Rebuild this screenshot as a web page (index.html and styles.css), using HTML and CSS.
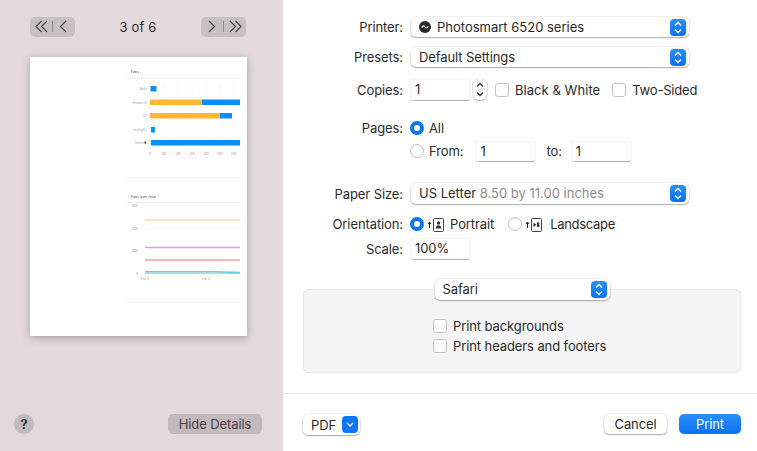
FILE: index.html
```html
<!DOCTYPE html>
<html lang="en">
<head>
<meta charset="utf-8">
<title>Print</title>
<link rel="stylesheet" href="styles.css">
</head>
<body>
<div class="app">
  <aside class="side">
    <div class="pager">
      <div class="pgroup">
        <svg class="pico" viewBox="0 0 45 20"><path d="M11.500 4 6 9.500l5.500 5.500M17 4l-5.500 5.500L17 15M36 4l-5.500 5.500L36 15"/><path class="sep" d="M22.500 4v11"/></svg>
      </div>
      <span class="pcount">3 of 6</span>
      <div class="pgroup">
        <svg class="pico" viewBox="0 0 45 20"><path d="m8 4 5.500 5.500L8 15M29 4l5.500 5.500L29 15M34.500 4 40 9.500 34.500 15"/><path class="sep" d="M22.500 4v11"/></svg>
      </div>
    </div>
    <div class="sheet">
      <svg class="sheet-art" viewBox="30 57 217 279">
        <g class="rules">
          <path d="M127 78.500h113M127 177.500h113M127 202.500h113M127 302.500h113"/>
          <path class="grid" d="M150 82v67M164 82v67M178 82v67M192 82v67M206 82v67M220 82v67M234 82v67M145 206.500h95M145 228.500h95"/>
        </g>
        <text class="t-title" x="131" y="73">Fans</text>
        <g class="t-axis" text-anchor="end">
          <text x="147" y="90">Alpha</text>
          <text x="147" y="103.500">Amazon IG</text>
          <text x="147" y="117">Q4</text>
          <text x="147" y="130.500">testing123</text>
          <text x="144" y="144">Tommy</text>
        </g>
        <rect class="blue" x="150.500" y="86" width="6" height="5.500"/>
        <rect class="gold" x="150" y="99.500" width="52" height="5.500"/>
        <rect class="blue" x="202" y="99.500" width="38" height="5.500"/>
        <rect class="gold" x="150" y="113" width="70" height="5.500"/>
        <rect class="blue" x="220" y="113" width="12" height="5.500"/>
        <rect class="blue" x="151" y="127" width="4" height="5.500"/>
        <rect class="blue" x="151" y="140" width="89" height="5.500"/>
        <rect class="dark" x="144.500" y="141.500" width="1.500" height="2"/>
        <g class="t-axis" text-anchor="middle">
          <text x="150" y="155">0</text><text x="164" y="155">100</text><text x="178" y="155">200</text><text x="192" y="155">300</text><text x="206" y="155">400</text><text x="220" y="155">500</text><text x="234" y="155">600</text>
        </g>
        <text class="t-title" x="131" y="197.500">Fans over time</text>
        <g class="t-axis" text-anchor="end">
          <text x="138" y="207">3000</text><text x="138" y="229.500">2000</text><text x="138" y="252">1000</text><text x="138" y="275">0</text>
        </g>
        <path class="l-yellow" d="M145 220h95"/>
        <path class="l-purple" d="M145 247.500h95"/>
        <path class="l-red" d="M145 260h95"/>
        <path class="l-green" d="M145 273.300h95"/>
        <path class="l-teal" d="M145 271.800h70l25 .8"/>
        <g class="t-axis" text-anchor="middle">
          <text x="145" y="279.500">Sep 12</text><text x="206" y="279.500">Sep 13</text>
        </g>
      </svg>
    </div>
    <div class="side-foot">
      <button class="help">?</button>
      <button class="hide">Hide Details</button>
    </div>
  </aside>
  <main class="main">
    <div class="form">
      <div class="row r-printer">
        <span class="lbl">Printer:</span>
        <div class="sel sel-wide">
          <svg class="printer-ico" viewBox="0 0 12 12"><circle cx="6" cy="6" r="6"/><path d="M2.800 6.800C4 4.200 5 4.600 6 6s2 1.600 3.200-.8"/></svg>
          <span class="sel-text sel-loose">Photosmart 6520 series</span>
          <span class="stepper"><svg viewBox="0 0 16 17"><path d="m5 6.500 3-3 3 3M5 10.500l3 3 3-3"/></svg></span>
        </div>
      </div>
      <div class="row r-presets">
        <span class="lbl">Presets:</span>
        <div class="sel sel-wide">
          <span class="sel-text">Default Settings</span>
          <span class="stepper"><svg viewBox="0 0 16 17"><path d="m5 6.500 3-3 3 3M5 10.500l3 3 3-3"/></svg></span>
        </div>
      </div>
      <div class="row r-copies">
        <span class="lbl">Copies:</span>
        <div class="field">1</div>
        <div class="spin"><svg viewBox="0 0 14 21"><path d="m4 7.500 3-3 3 3M4 13.500l3 3 3-3"/><path class="spin-line" d="M1 10.500h12"/></svg></div>
        <label class="chk c-bw"><span class="box"></span>Black &amp; White</label>
        <label class="chk c-two"><span class="box"></span>Two-Sided</label>
      </div>
      <div class="row r-pages">
        <span class="lbl">Pages:</span>
        <span class="radio on"></span><span class="rtext">All</span>
      </div>
      <div class="row r-from">
        <span class="lbl"></span>
        <span class="radio"></span><span class="rtext">From:</span>
        <div class="field f-from">1</div>
        <span class="rtext t-to">to:</span>
        <div class="field f-to">1</div>
      </div>
      <div class="row r-paper">
        <span class="lbl">Paper Size:</span>
        <div class="sel sel-wide sel-tall">
          <span class="sel-text sel-loose">US Letter <span class="dim">8.50 by 11.00 inches</span></span>
          <span class="stepper"><svg viewBox="0 0 16 17"><path d="m5 6.500 3-3 3 3M5 10.500l3 3 3-3"/></svg></span>
        </div>
      </div>
      <div class="row r-orient">
        <span class="lbl">Orientation:</span>
        <span class="radio on"></span>
        <svg class="oico" viewBox="0 0 17 15"><path class="arr" d="M2.500 11V5M1 7l1.500-2L4 7"/><rect x="6.500" y="1.500" width="10" height="13" rx="1"/><circle class="fill" cx="11.500" cy="6" r="1.700"/><path class="fill" d="M8.800 11.500c0-2.400 1.200-3.300 2.700-3.300s2.700.9 2.700 3.300z"/></svg>
        <span class="rtext t-port">Portrait</span>
        <span class="radio r-land"></span>
        <svg class="oico" viewBox="0 0 17 15"><path class="arr" d="M2.500 11V5M1 7l1.500-2L4 7"/><rect x="6.500" y="1.500" width="10" height="13" rx="1"/><path class="fill" d="M8.500 5.500v4.500l2.800-2.200zM12 5.500h2.300v4.500H12z"/></svg>
        <span class="rtext t-land">Landscape</span>
      </div>
      <div class="row r-scale">
        <span class="lbl">Scale:</span>
        <div class="field">100%</div>
      </div>
    </div>
    <section class="panel">
      <div class="sel sel-safari sel-tall">
        <span class="sel-text">Safari</span>
        <span class="stepper"><svg viewBox="0 0 16 17"><path d="m5 6.500 3-3 3 3M5 10.500l3 3 3-3"/></svg></span>
      </div>
      <div class="panel-checks">
        <label class="chk"><span class="box"></span>Print backgrounds</label>
        <label class="chk"><span class="box"></span>Print headers and footers</label>
      </div>
    </section>
    <footer class="foot">
      <div class="pdf">PDF<span class="pdf-arrow"><svg viewBox="0 0 16 17"><path d="m5 7 3 3 3-3"/></svg></span></div>
      <div class="actions">
        <button class="btn">Cancel</button>
        <button class="btn primary">Print</button>
      </div>
    </footer>
  </main>
</div>
</body>
</html>
```
FILE: styles.css
```css
* { box-sizing: border-box; }
html, body { margin: 0; padding: 0; height: 100%; }
body {
  font-family: Inter, "Liberation Sans", sans-serif;
  font-size: 13px;
  letter-spacing: -.1px;
  color: #2b2a2b;
  background: #fff;
  overflow: hidden;
}
button { font: inherit; letter-spacing: inherit; color: inherit; border: 0; padding: 0; }
.app { display: flex; width: 757px; height: 451px; }

/* sidebar */
.side {
  width: 283px;
  flex: none;
  background: #e4dadd;
  display: flex;
  flex-direction: column;
  padding: 17px 21px 17px 30px;
}
.pager { display: flex; align-items: center; justify-content: space-between; height: 20px; margin-right: 16px; }
.pgroup { width: 45px; height: 20px; border-radius: 5px; background: #c9c0c3; }
.pico { display: block; width: 45px; height: 20px; fill: none; stroke: #4a4648; stroke-width: 1.2; }
.pico .sep { stroke: #948c8f; stroke-width: 1; }
.pcount { font-size: 13px; letter-spacing: .2px; }
.sheet {
  width: 217px;
  height: 279px;
  margin-top: 20px;
  background: #fff;
  box-shadow: 0 2px 8px rgba(60, 40, 50, .35);
}
.sheet-art { display: block; width: 217px; height: 279px; filter: blur(.4px); letter-spacing: 0; }
.rules path { stroke: #eeeeee; stroke-width: 1; fill: none; }
.rules .grid { stroke: #f6f6f6; }
.t-title { font-size: 3.600px; fill: #444; }
.t-axis { font-size: 2.800px; fill: #9aa3ad; }
.blue { fill: #0a90f5; }
.gold { fill: #fdb732; }
.dark { fill: #333; }
.l-yellow, .l-purple, .l-red, .l-green, .l-teal { fill: none; stroke-width: 1.500; }
.l-yellow { stroke: #fbe2a0; }
.l-purple { stroke: #c9a8e2; }
.l-red { stroke: #fb9c9a; }
.l-green { stroke: #b9e6b0; }
.l-teal { stroke: #6fcdd6; stroke-width: 1.600; }
.side-foot { margin-top: auto; margin-left: -16px; display: flex; align-items: center; justify-content: space-between; }
.help {
  width: 20px; height: 20px; border-radius: 50%;
  background: #c4babe; color: #1f1d1e;
  font-size: 13px; font-weight: 600; line-height: 20px; text-align: center;
}
.hide {
  width: 94px; height: 20px; border-radius: 5px;
  background: #c4babe; color: #454144;
  font-size: 13px; line-height: 20px; text-align: center;
}

/* main */
.main { flex: 1; display: flex; flex-direction: column; background: #fff; padding-top: 17px; }
.form { padding-left: 20px; padding-right: 16px; }
.row { display: flex; align-items: center; }
.lbl { width: 100px; flex: none; text-align: right; margin-right: 8px; }
.r-printer, .r-presets { height: 20px; }
.r-presets { margin-top: 10px; }
.r-copies { height: 21px; margin-top: 12px; }
.r-pages { height: 20px; margin-top: 18px; }
.r-from { height: 20px; margin-top: 3px; }
.r-paper { height: 21px; margin-top: 22px; }
.r-orient { height: 20px; margin-top: 10px; }
.r-scale { height: 21px; margin-top: 4px; }

.sel {
  display: flex; align-items: center; justify-content: space-between;
  height: 20px; border-radius: 5px; background: #fff;
  padding: 0 3px 0 8px;
  box-shadow: 0 0 0 .5px rgba(0,0,0,.1), 0 1px 1.500px rgba(0,0,0,.3);
}
.sel-wide { width: 278px; }
.sel-tall { height: 21px; }
.sel-tall .sel-text { padding-bottom: 1px; }
.sel-safari { width: 175px; align-self: center; margin-top: -11px; }
.sel-text { flex: 1; white-space: nowrap; }
.sel-loose { letter-spacing: 0; }
.dim { color: #8c8c8c; }
.printer-ico { width: 12px; height: 12px; margin-right: 6px; flex: none; }
.printer-ico circle { fill: #2a2a2a; }
.printer-ico path { fill: none; stroke: #fff; stroke-width: 1.100; }
.stepper { width: 16px; height: 17px; border-radius: 4px; background: linear-gradient(#2b8ffb, #0a72f0); flex: none; }
.stepper svg, .pdf-arrow svg { display: block; width: 100%; height: 100%; fill: none; stroke: #fff; stroke-width: 1.300; }

.field {
  width: 59px; height: 21px; flex: none; background: #fff;
  padding-left: 4px; line-height: 21px;
  box-shadow: inset 0 0 0 .5px rgba(0,0,0,.08), 0 .5px 1px rgba(0,0,0,.3);
}
.r-from .field { height: 20px; line-height: 20px; }
.spin {
  width: 14px; height: 21px; margin-left: 3px; margin-right: 8px; flex: none; border-radius: 6px; background: #fff;
  box-shadow: 0 0 0 .5px rgba(0,0,0,.1), 0 1px 1.500px rgba(0,0,0,.28);
}
.spin svg { display: block; width: 14px; height: 21px; fill: none; stroke: #333; stroke-width: 1.300; }
.spin .spin-line { stroke: #eee; stroke-width: 1; }
.chk { display: flex; align-items: center; white-space: nowrap; }
.box {
  width: 14px; height: 14px; flex: none; margin-right: 6px; border-radius: 3px;
  background: #fff; border: 1px solid #c4c4c4;
}
.c-bw { letter-spacing: .05px; }
.c-two { margin-left: 12px; letter-spacing: -.2px; }
.radio {
  width: 14px; height: 14px; flex: none; border-radius: 50%; margin-left: -1px;
  background: #fff; border: 1px solid #c0c0c0;
}
.radio.on { background: #fff; border: 4px solid #0a78f5; }
.rtext { margin-left: 5px; }
.f-from { margin-left: 13px; }
.t-to { margin-left: 11px; margin-right: 10px; }
.oico { width: 17px; height: 15px; flex: none; margin-left: 3px; fill: none; stroke: #444; stroke-width: 1; }
.oico .arr { stroke: #222; stroke-width: 1; }
.oico .fill { fill: #333; stroke: none; }
.t-port { margin-left: 6px; }
.r-land { margin-left: 14px; }
.t-land { margin-left: 8px; letter-spacing: -.3px; }

.panel {
  margin: 30px 16px 0 20px;
  height: 84px;
  display: flex; flex-direction: column;
  background: #f5f5f5;
  border: 1px solid #e8e8e8;
  border-radius: 5px;
}
.panel-checks { display: flex; flex-direction: column; gap: 6px; margin: 19px 0 0 129px; }
.panel-checks .chk { height: 14px; }

.foot {
  margin-top: 20px;
  border-top: 1px solid #e2e2e2;
  flex: 1;
  display: flex; align-items: flex-start; justify-content: space-between;
  padding: 20px 16px 0 20px;
}
.pdf {
  width: 57px; height: 21px; border-radius: 5px; background: #fff;
  display: flex; align-items: center; justify-content: space-between;
  padding: 0 2px 0 8px;
  box-shadow: 0 0 0 .5px rgba(0,0,0,.1), 0 1px 1.500px rgba(0,0,0,.3);
}
.pdf-arrow { width: 16px; height: 17px; border-radius: 4px; background: #0a78f5; flex: none; }
.actions { display: flex; gap: 12px; }
.btn {
  width: 63px; height: 20px; border-radius: 5px; background: #fff; text-align: center; line-height: 20px;
  box-shadow: 0 0 0 .5px rgba(0,0,0,.1), 0 1px 1.500px rgba(0,0,0,.3);
}
.btn.primary { width: 62px; color: #fff; background: linear-gradient(#2b8ffb, #0a72f0); box-shadow: none; }
```
